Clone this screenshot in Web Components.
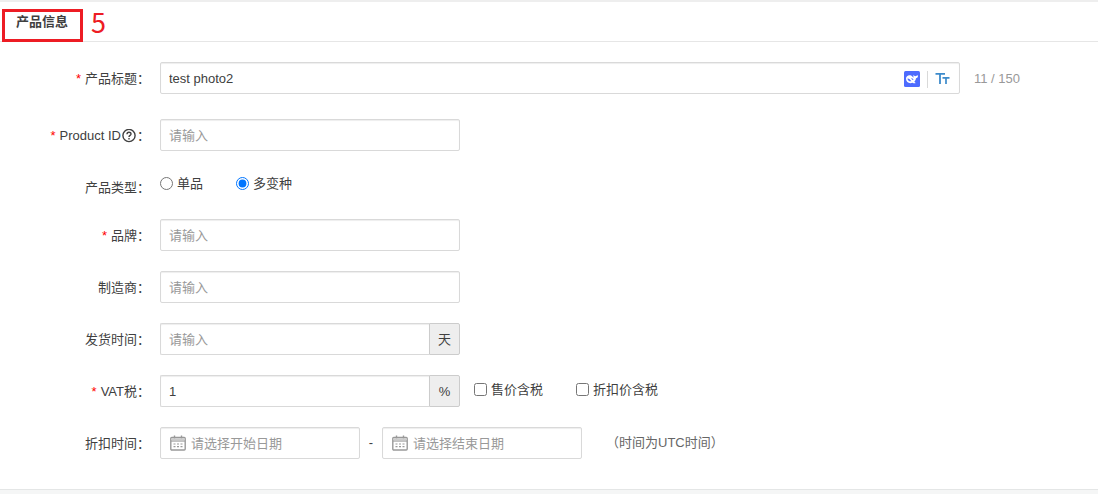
<!DOCTYPE html>
<html lang="zh-CN">
<head>
<meta charset="utf-8">
<meta name="viewport" content="width=device-width, initial-scale=1">
<title>产品信息</title>
<style>
  body {
    margin: 0;
    background: #f5f6f6;
    color: #404040;
    font: 13px/32px "Liberation Sans", "Noto Sans CJK SC", sans-serif;
  }
</style>
</head>
<body>
<product-card heading="产品信息" step="5">
  <form-row label="产品标题" required class="first">
    <text-field value="test photo2" label="产品标题" wide>
      <title-tools slot="tools"></title-tools>
    </text-field>
    <field-note>11 / 150</field-note>
  </form-row>
  <form-row label="Product ID" required help>
    <text-field placeholder="请输入" label="Product ID"></text-field>
  </form-row>
  <form-row label="产品类型" compact>
    <choice-group type="radio" options="单品,多变种" checked="多变种"></choice-group>
  </form-row>
  <form-row label="品牌" required>
    <text-field placeholder="请输入" label="品牌"></text-field>
  </form-row>
  <form-row label="制造商">
    <text-field placeholder="请输入" label="制造商"></text-field>
  </form-row>
  <form-row label="发货时间">
    <text-field placeholder="请输入" label="发货时间" unit="天"></text-field>
  </form-row>
  <form-row label="VAT税" required>
    <text-field value="1" label="VAT税" unit="%"></text-field>
    <choice-group type="checkbox" options="售价含税,折扣价含税" spaced></choice-group>
  </form-row>
  <form-row label="折扣时间">
    <date-field placeholder="请选择开始日期"></date-field>
    <range-dash></range-dash>
    <date-field placeholder="请选择结束日期"></date-field>
    <field-note zone>（时间为UTC时间）</field-note>
  </form-row>
</product-card>

<script>
class Base extends HTMLElement {
  connectedCallback() {
    if (this.shadowRoot) return;
    this.attachShadow({ mode: "open" }).innerHTML =
      "<style>*{box-sizing:border-box}" + this.css() + "</style>" + this.html();
  }
  attr(name) { return this.getAttribute(name) || ""; }
}

customElements.define("product-card", class extends Base {
  css() { return `
    :host { display: block; background: #fff; border-top: 2px solid #eee; border-bottom: 1px solid #e4e6e6; }
    header { position: relative; height: 40px; padding: 0 16px; border-bottom: 1px solid #e6e6e6; }
    h2 { margin: 0; font-size: 13px; line-height: 40px; font-weight: 700; }
    .frame { position: absolute; left: 2px; top: 7px; width: 81px; height: 33px; border: 3px solid #ed1c24; }
    .step { position: absolute; left: 91px; top: 4px; font: 27px/32px "Noto Sans CJK SC", sans-serif; color: #ed1c24; }
    form { display: flex; flex-direction: column; gap: 20px; padding: 20px 0 30px; }
  `; }
  html() { return `
    <header><h2>${this.attr("heading")}</h2><span class="frame"></span><span class="step">${this.attr("step")}</span></header>
    <form><slot></slot></form>`; }
});

customElements.define("form-row", class extends Base {
  css() { return `
    :host { display: grid; grid-template-columns: 150px 1fr; column-gap: 10px; height: 32px; }
    :host([compact]) { height: 28px; }
    :host(.first) { margin-bottom: 5px; }
    .label { display: flex; justify-content: flex-end; align-items: center; height: 32px; padding-top: 2px; white-space: nowrap; }
    .star { color: #f00; margin-right: 4px; }
    .body { display: flex; align-items: flex-start; }
    svg { width: 14px; height: 14px; margin: 0 1px; }
  `; }
  html() { return `
    <span class="label">${this.hasAttribute("required") ? '<span class="star">*</span>' : ""}<span>${this.attr("label")}</span>${
      this.hasAttribute("help") ? `<svg viewBox="0 0 14 14" fill="none" stroke="#404040" stroke-width="1.4"><circle cx="7" cy="6.5" r="6.1"/><path d="M5 5.2C5 2.5 9 2.6 9 5C9 6.5 7 6.3 7 8.1M7 9.1V10.5"/></svg>` : ""}<span>：</span></span>
    <div class="body"><slot></slot></div>`; }
});

customElements.define("text-field", class extends Base {
  css() { return `
    :host { display: flex; width: 300px; height: 32px; }
    :host([wide]) { width: 800px; }
    .box { display: flex; flex: 1; min-width: 0; border: 1px solid #d9d9d9; border-radius: 2px; background: #fff; box-shadow: inset 0 1px 1px #eee; }
    input { flex: 1; min-width: 0; border: 0; outline: 0; padding: 2px 8px 0; background: none; color: inherit; font: inherit; line-height: 28px; }
    input::placeholder { color: #999; opacity: 1; }
    .box.joined { border-right: 0; border-radius: 2px 0 0 2px; }
    .unit { width: 31px; line-height: 32px; text-align: center; background: #eee; border: 1px solid #ccc; border-radius: 0 2px 2px 0; }
  `; }
  html() {
    const unit = this.attr("unit");
    return `<div class="box${unit ? " joined" : ""}"><input type="text" aria-label="${this.attr("label")}" value="${this.attr("value")}" placeholder="${this.attr("placeholder")}"><slot name="tools"></slot></div>${
      unit ? `<span class="unit">${unit}</span>` : ""}`;
  }
});

customElements.define("title-tools", class extends Base {
  css() { return `
    :host { display: flex; align-items: center; height: 32px; padding-right: 9px; }
    button { display: flex; padding: 0; border: 0; background: none; cursor: pointer; }
    i { width: 1px; height: 17px; margin: 0 7px; background: #d9d9d9; }
    svg { display: block; }
  `; }
  html() { return `
    <button type="button" aria-label="AI">
      <svg width="16" height="16" viewBox="0 0 16 16"><rect width="16" height="16" rx="1.5" fill="#4d6bfe"/>
      <path fill="#fff" d="M2 7.8C2 5.2 4.1 3.8 6.2 4.2C7.5 4.5 8.6 5.6 9.7 6.7C9.4 5.8 9.1 5 9.6 4.1C10 4.8 10.5 5.2 11.2 5.2C12 5 12.9 4.7 14.1 4.2C14.1 6 13.2 7.1 12 7.3C11.8 8.9 11.2 10 10.3 10.8L11.7 12.1C10.5 12.6 9.3 12.2 8.6 11.7C5.3 13.1 2 11.2 2 7.8Z"/>
      <path fill="#4d6bfe" d="M3.5 7.4C5.1 7.2 6.2 8.5 7.4 10.2C5.3 10.7 3.6 9.5 3.5 7.4ZM7.1 7.2C8.4 6.9 9.4 7.7 9.5 9.1C8.5 9.2 7.9 8.2 7.1 7.2Z"/></svg>
    </button><i></i>
    <button type="button" aria-label="大小写">
      <svg width="15" height="16" viewBox="0 0 15 16" fill="none" stroke="#3d8bcb"><path stroke-width="1.8" d="M.5 2.8H10M5 3V13"/><path stroke-width="1.7" d="M7.5 6.8H14.5M11 7V13"/></svg>
    </button>`; }
});

customElements.define("field-note", class extends Base {
  css() { return `
    :host { margin-left: 14px; color: #999; line-height: 34px; white-space: nowrap; }
    :host([zone]) { margin-left: 24px; color: #666; line-height: 32px; }
  `; }
  html() { return `<slot></slot>`; }
});

customElements.define("choice-group", class extends Base {
  css() { return `
    :host { display: flex; gap: 33px; line-height: 26px; }
    :host([spaced]) { margin-left: 14px; line-height: 30px; }
    label { display: flex; align-items: center; gap: 4px; height: 24px; white-space: nowrap; }
    :host([spaced]) label { height: 28px; }
    input { width: 13px; height: 13px; margin: 0; }
    span { padding-top: 1px; }
  `; }
  html() {
    return this.attr("options").split(",").map(o =>
      `<label><input type="${this.attr("type")}" name="choice"${o === this.attr("checked") ? " checked" : ""}><span>${o}</span></label>`).join("");
  }
});

customElements.define("date-field", class extends Base {
  css() { return `
    :host { display: flex; align-items: center; gap: 5px; width: 200px; height: 32px; padding-left: 9px; box-sizing: border-box; border: 1px solid #d9d9d9; border-radius: 2px; box-shadow: inset 0 1px 1px #eee; }
    svg { flex: none; }
    input { flex: 1; min-width: 0; border: 0; outline: 0; padding: 2px 0 0; background: none; color: inherit; font: inherit; line-height: 28px; }
    input::placeholder { color: #999; opacity: 1; }
  `; }
  html() { return `
    <svg width="16" height="16" viewBox="0 0 16 16" fill="none" stroke="#999" stroke-width="1.4">
      <rect x=".8" y="2.5" width="14.4" height="12.5" rx="1"/><path stroke-width="1.2" d="M1 6H15"/><path d="M4.5 0.5V4M11.5 0.5V4"/>
      <path fill="#ccc" stroke="none" d="M1.5 3.2H14.5V5.4H1.5Z"/>
      <path stroke-width="1.2" stroke-dasharray="2 1.5" d="M3.5 9H13M3.5 11.7H13"/></svg>
    <input type="text" aria-label="${this.attr("placeholder")}" placeholder="${this.attr("placeholder")}">`; }
});

customElements.define("range-dash", class extends Base {
  css() { return `:host { width: 22px; text-align: center; }`; }
  html() { return `-`; }
});
</script>
</body>
</html>
